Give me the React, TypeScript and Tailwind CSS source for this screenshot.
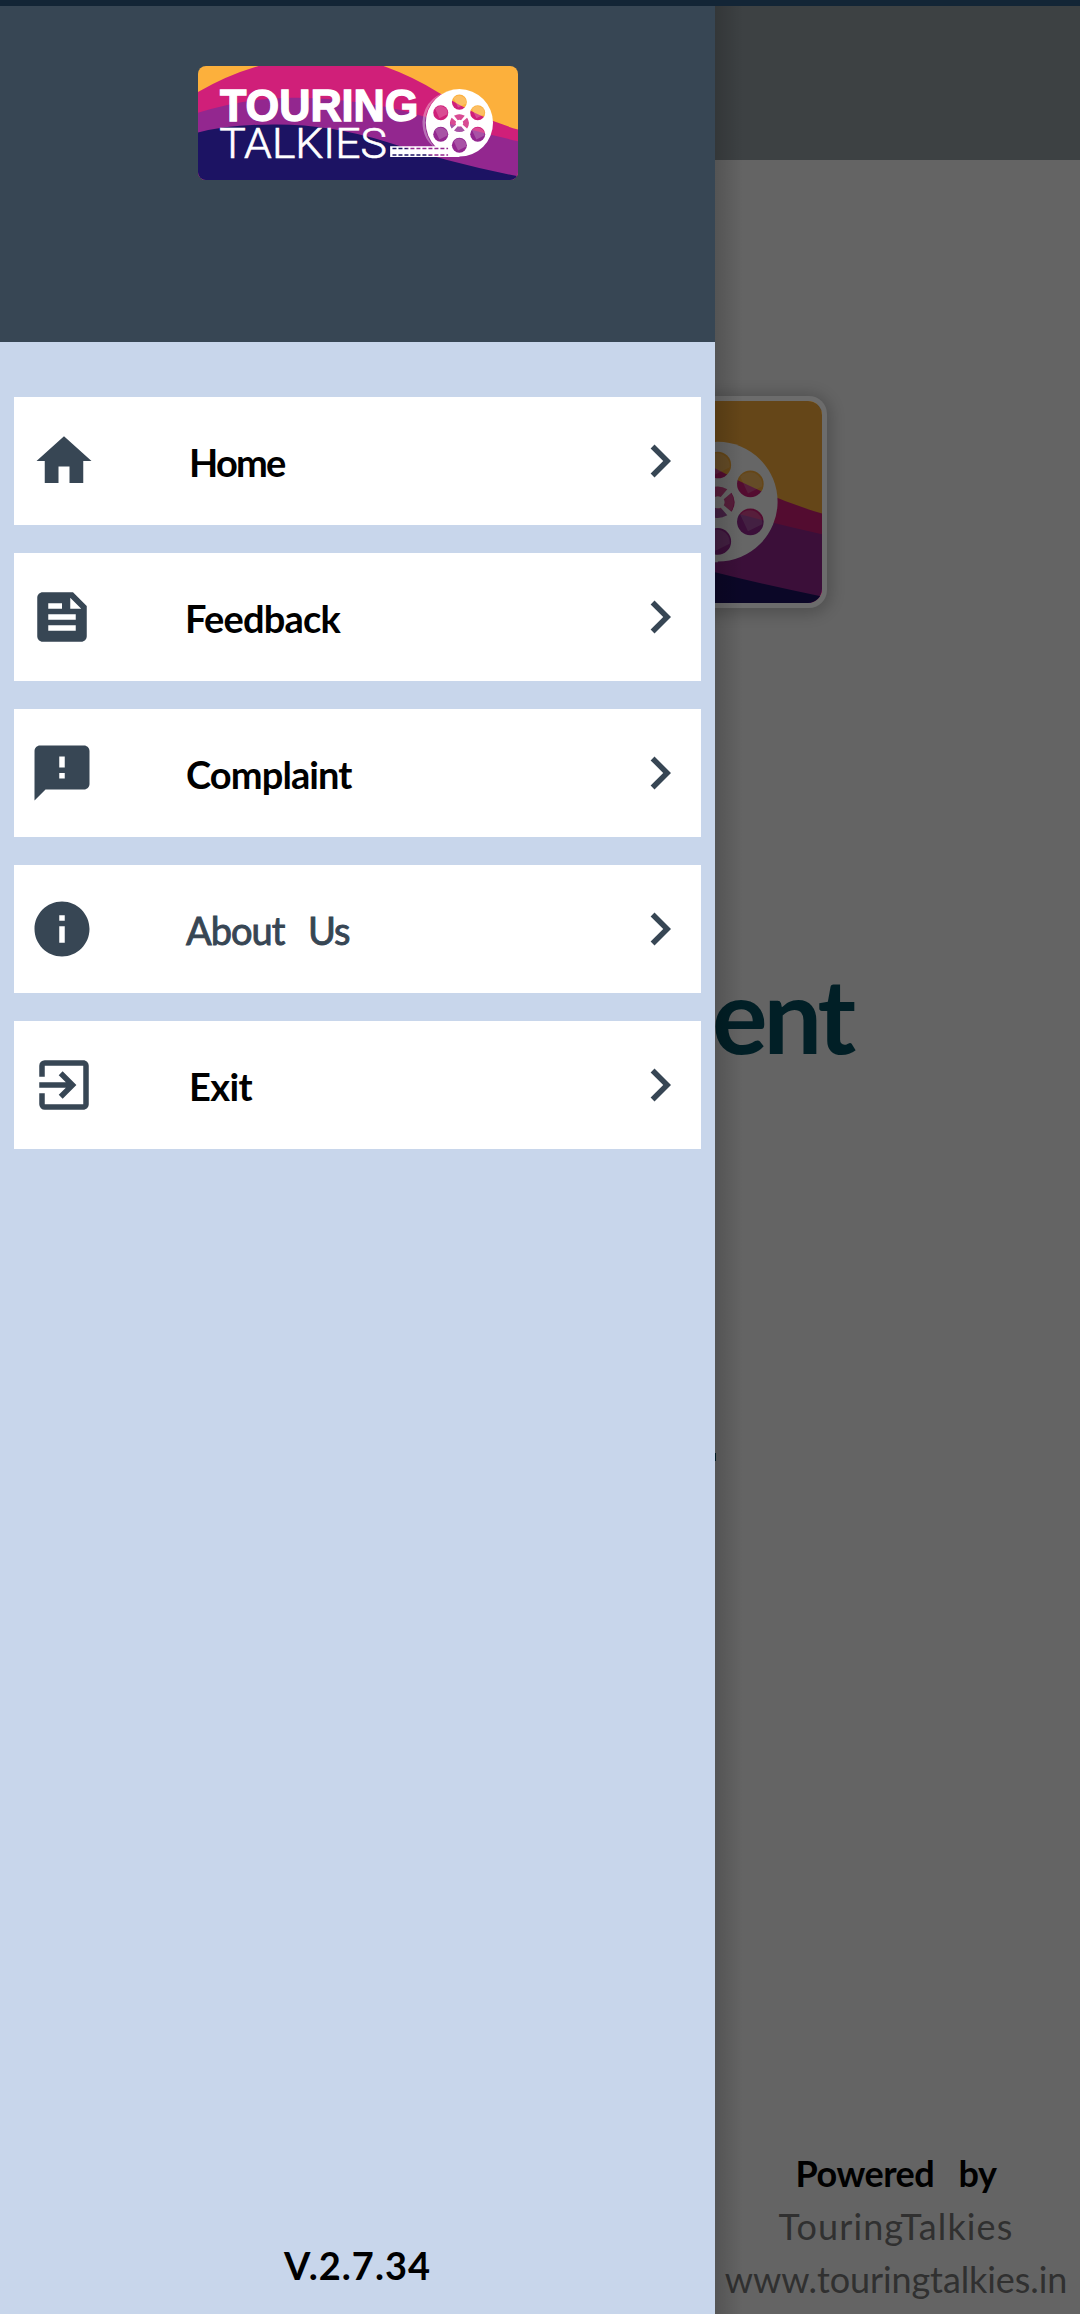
import { useId } from 'react';
import type { IconType } from 'react-icons';
import { MdHome, MdFeed, MdFeedback, MdInfo, MdExitToApp, MdChevronRight } from 'react-icons/md';

const HOLES = [
  [838, 156],
  [893, 188],
  [893, 252],
  [838, 285],
  [782, 252],
  [782, 188],
];

function Logo({ className, wordmark = true }: { className: string; wordmark?: boolean }) {
  const id = useId();
  return (
    <svg viewBox="53 48 961 341" preserveAspectRatio="none" className={className} aria-label="Touring Talkies">
      <defs>
        <clipPath id={`${id}c`}>
          <rect x="53" y="48" width="961" height="341" rx="24" />
        </clipPath>
        <mask id={`${id}m`}>
          <circle cx="838" cy="218" r="101" fill="#fff" />
          <path d="M630 288H838V320H630Z" fill="#fff" />
          {HOLES.map(([x, y]) => (
            <circle key={`${x}-${y}`} cx={x} cy={y} r="22.5" fill="#000" />
          ))}
          <path
            d="M822 197Q838 188 854 197L843 210Q838 208 833 210ZM822 241Q838 250 854 241L843 228Q838 230 833 228ZM815 203Q804 219 815 235L828 224Q825 219 828 214ZM861 203Q872 219 861 235L848 224Q851 219 848 214Z"
            fill="#000"
          />
          <path d="M637 294.500H804M637 314.500H804" stroke="#000" strokeWidth="4.500" strokeDasharray="12 6" />
        </mask>
      </defs>
      <g clipPath={`url(#${id}c)`}>
        <rect x="53" y="48" width="961" height="341" fill="#fcb03c" />
        <path d="M53 126Q140 75 235 48H610Q700 80 780 130Q900 205 1014 238V389H53Z" fill="#d01f79" />
        <path d="M53 188Q210 140 350 143Q540 146 700 190Q860 238 1014 273V389H53Z" fill="#93278f" />
        <path d="M53 247Q150 222 290 223Q450 223 620 275Q800 335 1014 378V389H53Z" fill="#1c1363" />
      </g>
      <path d="M838 117A102 102 0 0 0 770 296Q727 270 727 215Q732 130 838 117Z" fill="#fff" opacity=".35" />
      <g mask={`url(#${id}m)`}>
        <rect x="620" y="100" width="330" height="230" fill="#fff" />
      </g>
      {HOLES.map(([x, y]) => (
        <path key={`${x}-${y}`} d={`M${x - 17} ${y - 12}A21 21 0 0 1 ${x + 20} ${y + 4}L${x - 4} ${y + 16}Z`} fill="#fff" opacity=".2" />
      ))}
      <circle cx="838" cy="219" r="27" fill="#fff" opacity=".2" />
      {wordmark && (
        <>
          <text x="119" y="214" textLength="596" lengthAdjust="spacingAndGlyphs" fontSize="134" fill="#fff" stroke="#fff" strokeWidth="4" className="font-['Liberation_Sans',sans-serif] font-bold">
            TOURING
          </text>
          <text x="117" y="322" textLength="503" lengthAdjust="spacingAndGlyphs" fontSize="128" fill="#fff" stroke="#fff" strokeWidth="2" className="font-[Roboto,sans-serif] font-light">
            TALKIES
          </text>
        </>
      )}
    </svg>
  );
}

type Item = { label: string; Icon: IconType; iconClass: string; textClass: string };

const ITEMS: Item[] = [
  { label: 'Home', Icon: MdHome, iconClass: 'ml-[17px]', textClass: 'left-[175px] tracking-[-1.8px] font-bold text-black' },
  { label: 'Feedback', Icon: MdFeed, iconClass: 'ml-[15px]', textClass: 'left-[171px] tracking-[-0.8px] font-bold text-black' },
  { label: 'Complaint', Icon: MdFeedback, iconClass: 'ml-[15px]', textClass: 'left-[172px] tracking-[-0.9px] font-bold text-black' },
  { label: 'About Us', Icon: MdInfo, iconClass: 'ml-[15px]', textClass: 'left-[172px] tracking-[-1px] [word-spacing:15px] [-webkit-text-stroke:0.9px_#374654] text-[#374654]' },
  { label: 'Exit', Icon: MdExitToApp, iconClass: 'ml-[17px]', textClass: 'left-[175px] tracking-[-0.6px] font-bold text-black' },
];

function MenuRow({ label, Icon, iconClass, textClass }: Item) {
  return (
    <button className="relative flex h-32 w-full items-center justify-between bg-white pr-2 text-left">
      <Icon className={`size-[66px] text-[#374654] ${iconClass}`} />
      <span className={`absolute top-[41px] whitespace-nowrap text-[38px] leading-[48px] ${textClass}`}>{label}</span>
      <MdChevronRight className="size-[66px] text-[#374654]" />
    </button>
  );
}

export default function App() {
  return (
    <div className="flex h-[2314px] w-[1080px] flex-col overflow-hidden bg-[#646464] font-[Lato,sans-serif]">
      <div className="h-1.5 shrink-0 bg-[#132536]" />
      <div className="flex min-h-0 flex-1">
        <aside className="flex w-[715px] shrink-0 flex-col bg-[#c8d6eb]">
          <header className="flex h-[336px] justify-center bg-[#374654] pt-[60px] pl-px">
            <Logo className="h-[114px] w-[320px]" />
          </header>
          <nav className="flex flex-col gap-7 px-3.5 pt-[55px]">
            {ITEMS.map((item) => (
              <MenuRow key={item.label} {...item} />
            ))}
          </nav>
          <p className="mt-auto pb-[25px] text-center text-[38px] leading-[48px] font-bold tracking-[1px] text-black">V.2.7.34</p>
        </aside>

        <main className="relative flex flex-1 flex-col overflow-hidden">
          <div className="h-[154px] shrink-0 bg-[#3d4143]" />
          <div className="absolute top-[390px] left-[-467px] rounded-[18px] bg-[#6c6c6c] p-[5px] shadow-[0_2px_14px_5px_rgba(0,0,0,0.18)]">
            <div className="relative">
              <Logo className="h-[202px] w-[569px]" wordmark={false} />
              <div className="absolute inset-0 rounded-[14px] bg-black/60" />
            </div>
          </div>
          <h1 className="mt-[784px] ml-[-3px] text-[104px] leading-[140px] font-bold tracking-[-4px] text-[#011f26]">ent</h1>
          <div className="mt-[369px] h-2 w-px bg-[#011f26]" />
          <footer className="mt-auto pr-[3px] pb-[8px] text-center text-[36px] leading-[53px] whitespace-nowrap text-[#303030]">
            <p className="font-bold tracking-[-0.5px] text-black [word-spacing:16px]">Powered by</p>
            <p className="tracking-[1.1px]">TouringTalkies</p>
            <p className="tracking-[-0.1px]">www.touringtalkies.in</p>
          </footer>
          <div className="absolute inset-y-0 left-0 w-7 bg-linear-to-r from-black/16 to-transparent" />
        </main>
      </div>
    </div>
  );
}
